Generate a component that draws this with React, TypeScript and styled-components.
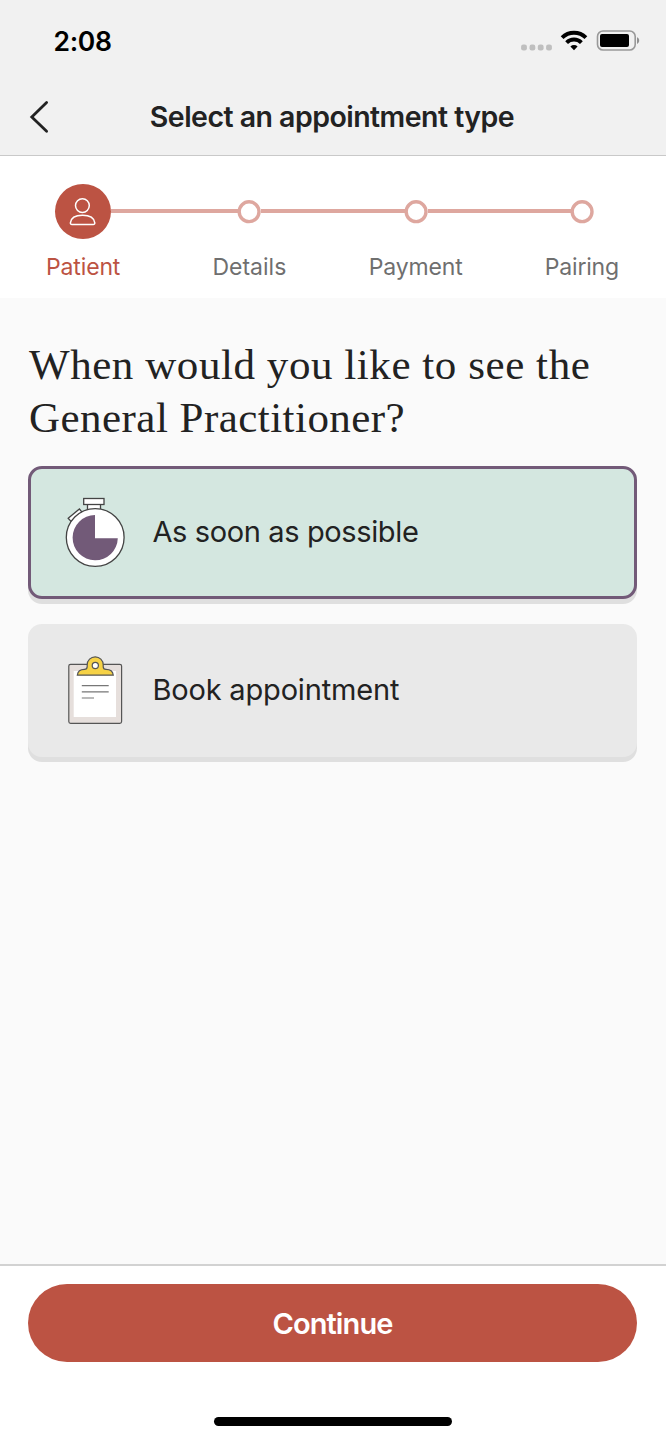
import React from "react";
import styled, { createGlobalStyle } from "styled-components";

const GlobalStyle = createGlobalStyle`
  * { box-sizing: border-box; }
  body { margin: 0; background: #fafafa; }
`;

const Screen = styled.div`
  width: 666px;
  height: 1440px;
  display: flex;
  flex-direction: column;
  overflow: hidden;
  background: #fafafa;
  color: #222;
  font-family: Inter, "Liberation Sans", sans-serif;
`;

const Top = styled.header`
  height: 156px;
  background: #f1f1f1;
  border-bottom: 1px solid #c9c9c9;
`;

const StatusBar = styled.div`
  height: 80px;
  padding: 1px 26px 0 53.5px;
  display: flex;
  align-items: center;
  justify-content: space-between;
`;

const Time = styled.span`
  font-size: 26.5px;
  font-weight: 600;
  color: #000;
  line-height: 32px;
  letter-spacing: -0.3px;
`;

const NavBar = styled.div`
  height: 74px;
  padding: 0 31px 0 29px;
  display: grid;
  grid-template-columns: 20px 1fr 20px;
  align-items: center;
  justify-items: center;
`;

const BackButton = styled.button`
  display: flex;
  padding: 0;
  border: 0;
  background: none;
`;

const Title = styled.h1`
  margin: 0;
  font-size: 28.5px;
  font-weight: 600;
  line-height: 36px;
  letter-spacing: -0.53px;
  white-space: nowrap;
`;

const Stepper = styled.section`
  height: 142px;
  padding-top: 28px;
  background: #fff;
`;

const Track = styled.div`
  width: 665px;
  padding: 0 71px 0 55px;
  display: flex;
  align-items: center;
`;

const CurrentNode = styled.div`
  width: 56px;
  height: 55px;
  border-radius: 50%;
  background: #bc5343;
  display: flex;
  align-items: center;
  justify-content: center;
`;

const Connector = styled.div<{ $length: number }>`
  flex: ${(p) => p.$length} 1 0;
  height: 4px;
  margin-bottom: 1px;
  background: #dea79f;
`;

const Labels = styled.div`
  width: 665px;
  margin-top: 14px;
  display: grid;
  grid-template-columns: repeat(4, 1fr);
  text-align: center;
`;

const Label = styled.span<{ $active?: boolean; $spacing: number }>`
  font-size: 23px;
  line-height: 28px;
  letter-spacing: ${(p) => p.$spacing}px;
  color: ${(p) => (p.$active ? "#bc5343" : "#6f6f6f")};
`;

const Content = styled.main`
  flex: 1;
  padding: 40px 29px 0 28px;
`;

const Question = styled.h2`
  margin: 0 0 22px;
  padding-left: 1px;
  font-family: "Liberation Serif", serif;
  font-size: 43px;
  font-weight: 400;
  line-height: 53px;
`;

const QuestionLine = styled.span<{ $spacing: number }>`
  display: block;
  white-space: nowrap;
  letter-spacing: ${(p) => p.$spacing}px;
`;

const Options = styled.div`
  display: flex;
  flex-direction: column;
  gap: 25px;
`;

const Option = styled.button<{ $selected?: boolean }>`
  width: 100%;
  height: 133px;
  padding: 0 0 0 ${(p) => (p.$selected ? 33 : 36)}px;
  display: flex;
  align-items: center;
  gap: 26.4px;
  border: ${(p) => (p.$selected ? "3px solid #725a78" : "0")};
  border-radius: 14px;
  background: ${(p) => (p.$selected ? "#d4e7e0" : "#e9e9e9")};
  box-shadow: 0 5px 0 #dfdfdf;
  color: #222;
  font-family: inherit;
  text-align: left;
`;

const OptionText = styled.span<{ $spacing: number }>`
  padding-bottom: 2px;
  font-size: 29px;
  line-height: 36px;
  letter-spacing: ${(p) => p.$spacing}px;
`;

const Footer = styled.footer`
  height: 176px;
  padding: 17.5px 29px 0 28px;
  border-top: 2px solid #d2d2d2;
  background: #fff;
  display: flex;
  flex-direction: column;
`;

const Continue = styled.button`
  height: 78.5px;
  padding: 2px 0 0;
  border: 0;
  border-radius: 40px;
  background: #bc5343;
  color: #fff;
  font-family: inherit;
  font-size: 29px;
  font-weight: 600;
  letter-spacing: -0.9px;
`;

const HomeIndicator = styled.div`
  width: 238px;
  height: 9px;
  margin: 55px auto 0;
  border-radius: 5px;
  background: #000;
`;

const StatusIcons = () => (
  <svg width="120" height="24" viewBox="520 29 120 24">
    <g fill="#bfbfbf">
      {[524, 532.4, 540.7, 549].map((x) => (
        <rect key={x} x={x - 2.9} y="44.6" width="5.8" height="5.8" rx="2.2" />
      ))}
    </g>
    <g fill="none" stroke="#000" strokeWidth="4">
      <path d="M562.1 37.6A17.2 17.2 0 0 1 585.9 37.6" />
      <path d="M566.6 42.6A10.6 10.6 0 0 1 581.4 42.6" />
    </g>
    <path d="M570.4 46.4A5.3 5.3 0 0 1 577.6 46.4L574 50.2Z" fill="#000" />
    <rect x="597.5" y="31" width="37.7" height="19" rx="5.5" fill="none" stroke="#999" strokeWidth="1.6" />
    <rect x="600" y="34" width="29" height="13" rx="2" fill="#000" />
    <path d="M637 37.3C639.9 38.4 639.9 42.8 637 44Z" fill="#909090" />
  </svg>
);

const BackIcon = () => (
  <svg width="20" height="34" viewBox="29 100 20 34" fill="none" stroke="#222" strokeWidth="2.8" strokeLinecap="round" strokeLinejoin="miter">
    <path d="M46.6 102.6L31.8 117L46.6 131.3" />
  </svg>
);

const StepNode = () => (
  <svg width="23" height="24" viewBox="0 0 23 24" overflow="visible" fill="none" stroke="#dea79f" strokeWidth="3.4">
    <circle cx="11.1" cy="11.7" r="9.9" />
  </svg>
);

const PersonIcon = () => (
  <svg width="28" height="30" viewBox="69 197 28 30" fill="none" stroke="#fff" strokeWidth="1.5">
    <circle cx="82.4" cy="205.6" r="6.9" />
    <path d="M72 224.5Q70.3 224.5 70.4 222.8C70.9 218 75.5 215.2 82.5 215.2S94.2 218 94.8 222.8Q94.9 224.5 93.2 224.5Z" />
  </svg>
);

const StopwatchIcon = () => (
  <svg width="62" height="72" viewBox="64 497.2 62 72" fill="#fff" stroke="#444" strokeWidth="1.3">
    <path d="M68.2 518.5L79.4 509.2L82 512.4L71 521.6Z" />
    <rect x="87.5" y="504" width="13" height="6.5" />
    <rect x="83.7" y="498.7" width="20.3" height="6" />
    <circle cx="95.2" cy="537.7" r="28.9" />
    <path d="M95 515.2A22.6 22.6 0 1 0 117.8 538.4H95Z" fill="#725a78" stroke="none" />
  </svg>
);

const ClipboardIcon = () => (
  <svg width="62" height="72" viewBox="64 655 62 72" stroke="#555" strokeWidth="1.2">
    <rect x="68.8" y="664.3" width="52.8" height="59" rx="1.8" fill="#e6dfdc" />
    <rect x="73.7" y="671" width="42.3" height="46" fill="#fff" stroke="none" />
    <path d="M77.3 675.2C77.8 671.2 81 669.4 84.4 669.4C86.4 669.4 87.2 668.5 87.2 666.5V664.8A8 8 0 0 1 103.2 664.8V666.5C103.2 668.5 104 669.4 106 669.4C109.5 669.4 112.8 671.2 113.3 675.2Z" fill="#f6d246" />
    <circle cx="95.3" cy="665.5" r="3.1" fill="#fff" />
    <path d="M81.8 685.6H108.7M81.8 691.8H108.7M81.8 698H94" fill="none" stroke="#777" />
  </svg>
);

export default function App() {
  return (
    <>
      <GlobalStyle />
      <Screen>
        <Top>
          <StatusBar>
            <Time>2:08</Time>
            <StatusIcons />
          </StatusBar>
          <NavBar>
            <BackButton aria-label="Back">
              <BackIcon />
            </BackButton>
            <Title>Select an appointment type</Title>
          </NavBar>
        </Top>
        <Stepper>
          <Track>
            <CurrentNode>
              <PersonIcon />
            </CurrentNode>
            <Connector $length={127} />
            <StepNode />
            <Connector $length={143.5} />
            <StepNode />
            <Connector $length={143.5} />
            <StepNode />
          </Track>
          <Labels>
            <Label $active $spacing={-0.15}>Patient</Label>
            <Label $spacing={0}>Details</Label>
            <Label $spacing={-0.15}>Payment</Label>
            <Label $spacing={-0.2}>Pairing</Label>
          </Labels>
        </Stepper>
        <Content>
          <Question>
            <QuestionLine $spacing={0.56}>When would you like to see the</QuestionLine>
            <QuestionLine $spacing={0.46}>General Practitioner?</QuestionLine>
          </Question>
          <Options>
            <Option $selected>
              <StopwatchIcon />
              <OptionText $spacing={-0.37}>As soon as possible</OptionText>
            </Option>
            <Option>
              <ClipboardIcon />
              <OptionText $spacing={-0.17}>Book appointment</OptionText>
            </Option>
          </Options>
        </Content>
        <Footer>
          <Continue>Continue</Continue>
          <HomeIndicator />
        </Footer>
      </Screen>
    </>
  );
}
